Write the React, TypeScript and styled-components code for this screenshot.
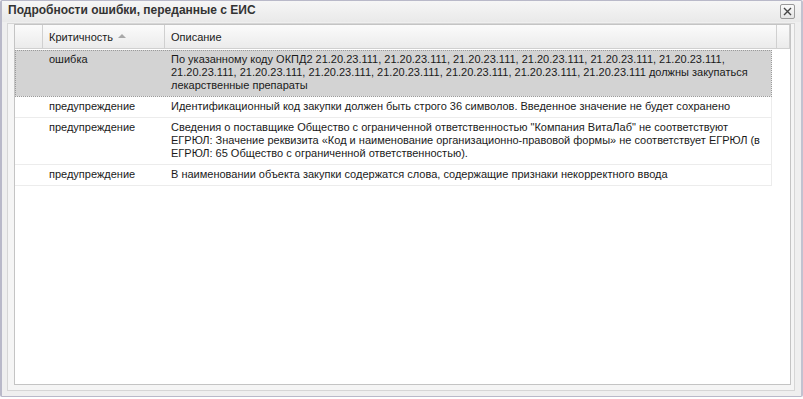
import styled, { createGlobalStyle } from 'styled-components'

const GlobalStyle = createGlobalStyle`
  html, body {
    margin: 0;
    padding: 0;
    background: #ffffff;
  }
  body {
    font-family: "Liberation Sans", Arial, sans-serif;
  }
`

const Window = styled.div`
  box-sizing: border-box;
  width: 803px;
  height: 397px;
  display: flex;
  flex-direction: column;
  background: #efefef;
  border: 1px solid #b9b9c9;
  border-left: 2px solid #b9b9c9;
  border-right: 2px solid #c2c2d0;
  border-radius: 2px;
`

const TitleBar = styled.div`
  height: 21px;
  flex-shrink: 0;
  display: flex;
  align-items: flex-start;
  justify-content: space-between;
  padding: 2px 5px 0 6px;
  box-sizing: border-box;
  background: linear-gradient(#f6f6f6, #e9e9e9);
`

const Title = styled.span`
  font-size: 12px;
  font-weight: bold;
  line-height: 15px;
  color: #333333;
`

const CloseButton = styled.button`
  box-sizing: border-box;
  width: 15px;
  height: 15px;
  margin-top: 1px;
  margin-right: 1px;
  padding: 0;
  display: flex;
  align-items: center;
  justify-content: center;
  background: linear-gradient(#fafafa, #e4e4e4);
  border: 1px solid #9a9a9a;
  border-radius: 2px;
`

const Body = styled.div`
  flex: 1;
  display: flex;
  padding: 1px 6px 5px 5px;
`

const Panel = styled.div`
  flex: 1;
  display: flex;
  border: 1px solid #d6d6d6;
  background: #f5f5f5;
  padding: 0 3px 5px 6px;
`

const Grid = styled.div`
  flex: 1;
  display: flex;
  flex-direction: column;
  background: #ffffff;
  border: 1px solid #c4c4c4;
  font-size: 11px;
  color: #1a1a1a;
`

const HeaderRow = styled.div`
  display: flex;
  height: 23px;
  background: linear-gradient(#fbfbfb, #ebebeb);
  border-bottom: 1px solid #d0d0d0;
`

const HeaderCell = styled.div<{ $width?: number }>`
  box-sizing: border-box;
  ${(p) => (p.$width ? `width: ${p.$width}px;` : 'flex: 1;')}
  display: flex;
  align-items: center;
  gap: 5px;
  padding: 0 6px;
  border-right: 1px solid #d0d0d0;
`

const SortArrow = styled.span`
  width: 0;
  height: 0;
  border-left: 4px solid transparent;
  border-right: 4px solid transparent;
  border-bottom: 4px solid #a8a8a8;
  margin-top: -1px;
`

const Rows = styled.div`
  display: flex;
  flex-direction: column;
  width: 757px;
  padding-top: 1px;
`

const Row = styled.div<{ $selected?: boolean }>`
  box-sizing: border-box;
  display: flex;
  background: ${(p) => (p.$selected ? '#d3d3d3' : '#ffffff')};
  border-right: 1px solid #ececec;
  border-bottom: 1px solid #ececec;
  outline: ${(p) => (p.$selected ? '1px dotted #9a9a9a' : 'none')};
  outline-offset: -1px;
`

const Cell = styled.div<{ $width?: number }>`
  box-sizing: border-box;
  ${(p) => (p.$width ? `width: ${p.$width}px;` : 'flex: 1;')}
  padding: 3px 6px 4px;
  line-height: 13px;
`

type Item = { level: string; text: string; selected?: boolean }

const items: Item[] = [
  {
    level: 'ошибка',
    text: 'По указанному коду ОКПД2 21.20.23.111, 21.20.23.111, 21.20.23.111, 21.20.23.111, 21.20.23.111, 21.20.23.111, 21.20.23.111, 21.20.23.111, 21.20.23.111, 21.20.23.111, 21.20.23.111, 21.20.23.111, 21.20.23.111 должны закупаться лекарственные препараты',
    selected: true,
  },
  {
    level: 'предупреждение',
    text: 'Идентификационный код закупки должен быть строго 36 символов. Введенное значение не будет сохранено',
  },
  {
    level: 'предупреждение',
    text: 'Сведения о поставщике Общество с ограниченной ответственностью "Компания ВитаЛаб" не соответствуют ЕГРЮЛ: Значение реквизита «Код и наименование организационно-правовой формы» не соответствует ЕГРЮЛ (в ЕГРЮЛ: 65 Общество с ограниченной ответственностью).',
  },
  {
    level: 'предупреждение',
    text: 'В наименовании объекта закупки содержатся слова, содержащие признаки некорректного ввода',
  },
]

const App = () => {
  return (
    <>
      <GlobalStyle />
      <Window>
        <TitleBar>
          <Title>Подробности ошибки, переданные с ЕИС</Title>
          <CloseButton aria-label="Закрыть">
            <svg width="9" height="9" viewBox="0 0 9 9">
              <path d="M1 1L8 8M8 1L1 8" stroke="#444" strokeWidth="1.4" />
            </svg>
          </CloseButton>
        </TitleBar>
        <Body>
          <Panel>
            <Grid>
              <HeaderRow>
                <HeaderCell $width={28} />
                <HeaderCell $width={122}>
                  Критичность <SortArrow />
                </HeaderCell>
                <HeaderCell>Описание</HeaderCell>
                <HeaderCell $width={12} />
              </HeaderRow>
              <Rows>
                {items.map((item, i) => (
                  <Row key={i} $selected={item.selected}>
                    <Cell $width={28} />
                    <Cell $width={122}>{item.level}</Cell>
                    <Cell>{item.text}</Cell>
                  </Row>
                ))}
              </Rows>
            </Grid>
          </Panel>
        </Body>
      </Window>
    </>
  )
}

export default App
